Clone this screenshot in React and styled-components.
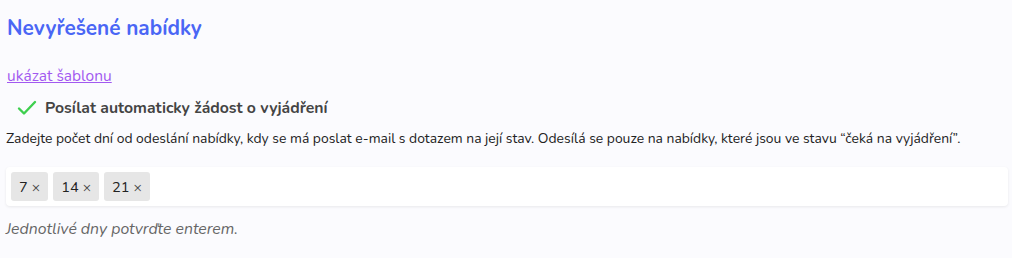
import React from "react";
import styled, { createGlobalStyle } from "styled-components";

const Global = createGlobalStyle`
  html, body { margin: 0; padding: 0; background: #fbfbfe; }
  body { font-family: "Nunito", "Noto Sans", sans-serif; color: #222; }
`;

const Page = styled.div`
  padding: 14px 4px 0 6px;
  display: flex;
  flex-direction: column;
`;

const Title = styled.h2`
  margin: 0 0 0 1px;
  font-size: 20.8px;
  line-height: 28px;
  font-weight: 700;
  color: #4a66f5;
`;

const TemplateLink = styled.a`
  margin: 24px 0 0 1px;
  font-size: 15.5px;
  line-height: 20px;
  color: #a259f0;
  text-decoration: underline;
  cursor: pointer;
  align-self: flex-start;
`;

const CheckRow = styled.label`
  display: flex;
  align-items: center;
  gap: 8px;
  margin: 12px 0 0 11px;
  font-size: 15.8px;
  line-height: 20px;
  font-weight: 700;
  color: #444;
`;

const Description = styled.p`
  margin: 12px 0 0 0;
  font-size: 13.9px;
  line-height: 18px;
  color: #222;
`;

const TagInput = styled.div`
  margin-top: 19px;
  display: flex;
  align-items: center;
  gap: 5px;
  padding: 5px 5px;
  background: #fff;
  border-radius: 4px;
  box-shadow: 0 1px 3px rgba(0, 0, 0, 0.08);
  height: 29px;
`;

const Tag = styled.span`
  display: inline-flex;
  align-items: center;
  gap: 4px;
  height: 29px;
  padding: 0 8px 0 8px;
  background: #e6e6e6;
  border-radius: 3px;
  font-size: 14.6px;
  color: #222;
`;

const Remove = styled.span`
  font-size: 14px;
  line-height: 1;
  margin-top: 2px;
  color: #444;
`;

const Hint = styled.p`
  margin: 13px 0 0 0;
  font-size: 15.8px;
  line-height: 20px;
  font-style: italic;
  color: #666;
`;

const Check = () => (
  <svg width="20" height="16" viewBox="0 0 20 16" fill="none">
    <path d="M2 8.5 L7 13.5 L18 2" stroke="#3ecf4f" strokeWidth="2.4" strokeLinecap="round" strokeLinejoin="round" />
  </svg>
);

export default function App() {
  return (
    <>
      <Global />
      <Page>
        <Title>Nevyřešené nabídky</Title>
        <TemplateLink>ukázat šablonu</TemplateLink>
        <CheckRow>
          <Check />
          Posílat automaticky žádost o vyjádření
        </CheckRow>
        <Description>
          Zadejte počet dní od odeslání nabídky, kdy se má poslat e-mail s dotazem na její stav. Odesílá se pouze na nabídky, které jsou ve stavu “čeká na vyjádření”.
        </Description>
        <TagInput>
          {[7, 14, 21].map((d) => (
            <Tag key={d}>
              {d}
              <Remove>×</Remove>
            </Tag>
          ))}
        </TagInput>
        <Hint>Jednotlivé dny potvrďte enterem.</Hint>
      </Page>
    </>
  );
}
